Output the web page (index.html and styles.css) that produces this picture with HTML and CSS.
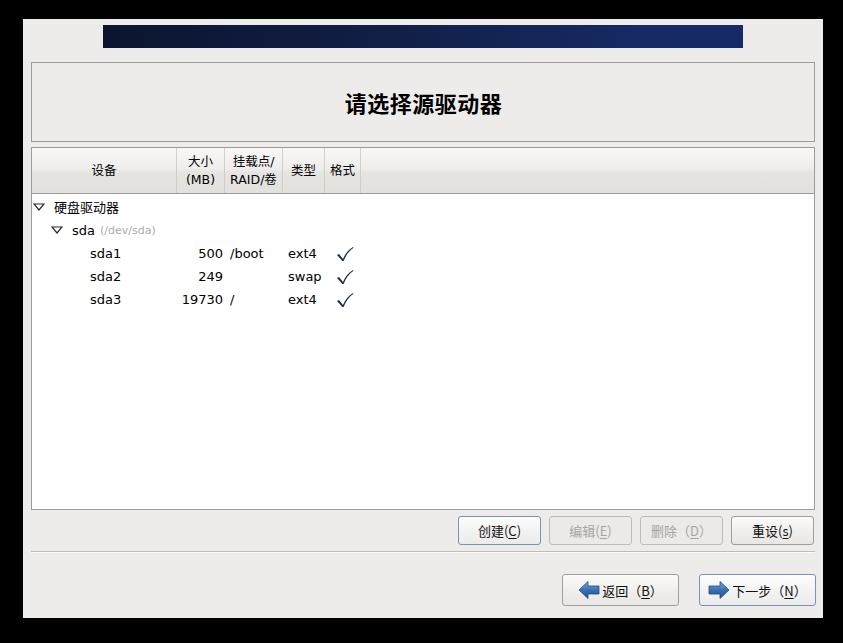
FILE: index.html
```html
<!DOCTYPE html>
<html>
<head>
<meta charset="utf-8">
<link rel="stylesheet" href="styles.css">
</head>
<body>
<div class="win">
  <div class="banner"></div>
  <div class="titlebox"><h1>请选择源驱动器</h1></div>
  <div class="tablebox">
    <div class="thead">
      <div class="th c1">设备</div>
      <div class="th c2">大小<br>(MB)</div>
      <div class="th c3">挂载点/<br>RAID/卷</div>
      <div class="th c4">类型</div>
      <div class="th c5">格式</div>
      <div class="th c6"></div>
    </div>
    <div class="tbody">
      <div class="row"><svg class="tri" width="12" height="8" viewBox="0 0 12 8"><path d="M1 1 L11 1 L6 7 Z" fill="none" stroke="#2a2a2a" stroke-width="1.2" stroke-linejoin="miter"/></svg><span class="lbl">硬盘驱动器</span></div>
      <div class="row lv2"><svg class="tri" width="12" height="8" viewBox="0 0 12 8"><path d="M1 1 L11 1 L6 7 Z" fill="none" stroke="#2a2a2a" stroke-width="1.2" stroke-linejoin="miter"/></svg><span class="lbl">sda</span><span class="dim">(/dev/sda)</span></div>
      <div class="row part"><span class="d1">sda1</span><span class="d2">500</span><span class="d3">/boot</span><span class="d4">ext4</span><span class="d5"><svg width="18" height="16" viewBox="0 0 18 16"><path d="M1 9 L3 8 L7 13 C9 8 12 4 17 1 L17.5 1.8 C13 5 10 9 7.6 15 L6.4 15 Z" fill="#1e2a4a"/></svg></span></div>
      <div class="row part"><span class="d1">sda2</span><span class="d2">249</span><span class="d3"></span><span class="d4">swap</span><span class="d5"><svg width="18" height="16" viewBox="0 0 18 16"><path d="M1 9 L3 8 L7 13 C9 8 12 4 17 1 L17.5 1.8 C13 5 10 9 7.6 15 L6.4 15 Z" fill="#1e2a4a"/></svg></span></div>
      <div class="row part"><span class="d1">sda3</span><span class="d2">19730</span><span class="d3">/</span><span class="d4">ext4</span><span class="d5"><svg width="18" height="16" viewBox="0 0 18 16"><path d="M1 9 L3 8 L7 13 C9 8 12 4 17 1 L17.5 1.8 C13 5 10 9 7.6 15 L6.4 15 Z" fill="#1e2a4a"/></svg></span></div>
    </div>
  </div>
  <div class="actions">
    <button class="btn focus">创建(<u>C</u>)</button>
    <button class="btn disabled">编辑(<u>E</u>)</button>
    <button class="btn disabled">删除（<u>D</u>）</button>
    <button class="btn">重设(<u>s</u>)</button>
  </div>
  <div class="sep"></div>
  <div class="nav">
    <button class="btn navbtn"><svg width="22" height="20" viewBox="0 0 22 20"><defs><linearGradient id="ga" x1="0" y1="0" x2="0" y2="1"><stop offset="0" stop-color="#7ea6d8"/><stop offset="0.5" stop-color="#3a6fb4"/><stop offset="1" stop-color="#1f4f91"/></linearGradient></defs><path d="M1 10 L10 1.5 L10 6 L21 6 L21 14 L10 14 L10 18.5 Z" fill="url(#ga)" stroke="#1d4a86" stroke-width="0.8"/></svg><span>返回（<u>B</u>）</span></button>
    <button class="btn navbtn focus"><svg width="22" height="20" viewBox="0 0 22 20"><defs><linearGradient id="gb" x1="0" y1="0" x2="0" y2="1"><stop offset="0" stop-color="#7ea6d8"/><stop offset="0.5" stop-color="#3a6fb4"/><stop offset="1" stop-color="#1f4f91"/></linearGradient></defs><path d="M21 10 L12 1.5 L12 6 L1 6 L1 14 L12 14 L12 18.5 Z" fill="url(#gb)" stroke="#1d4a86" stroke-width="0.8"/></svg><span>下一步（<u>N</u>）</span></button>
  </div>
</div>
</body>
</html>
```
FILE: styles.css
```css
html, body {
  margin: 0;
  padding: 0;
  background: #000;
}
body {
  width: 843px;
  height: 643px;
  padding-top: 19px;
  box-sizing: border-box;
  font-family: "DejaVu Sans", "Noto Sans CJK SC", sans-serif;
  font-size: 13px;
  color: #000;
}
.win {
  margin-left: 23px;
  width: 800px;
  height: 599px;
  background: #edecea;
  box-sizing: border-box;
  padding: 6px 8px 0 8px;
  display: flex;
  flex-direction: column;
}
.banner {
  align-self: center;
  width: 640px;
  height: 23px;
  background: linear-gradient(90deg, #0b1530 0%, #111f47 45%, #172a66 85%, #152a66 100%);
}
.titlebox {
  margin-top: 14px;
  height: 80px;
  border: 1px solid #9c9b98;
  box-sizing: border-box;
  display: flex;
  align-items: center;
  justify-content: center;
}
.titlebox h1 {
  margin: 0;
  font-family: "Noto Sans CJK SC", sans-serif;
  font-size: 22px;
  font-weight: bold;
  letter-spacing: 0.5px;
  padding-left: 1px;
}
.tablebox {
  margin-top: 5px;
  height: 363px;
  border: 1px solid #9c9b98;
  box-sizing: border-box;
  background: #fff;
}
.thead {
  display: flex;
  height: 46px;
  border-bottom: 1px solid #9c9b98;
  box-sizing: border-box;
  background: linear-gradient(#f8f7f5, #efeeec 45%, #e5e4e1 55%, #e2e1de);
}
.th {
  display: flex;
  align-items: center;
  justify-content: center;
  text-align: center;
  font-size: 12.5px;
  line-height: 18px;
  border-right: 1px solid #cfcecb;
  box-sizing: border-box;
}
.c1 { width: 145px; }
.c2 { width: 48px; }
.c3 { width: 58px; }
.c4 { width: 42px; }
.c5 { width: 36px; }
.c6 { flex: 1; border-right: none; }
.tbody {
  padding-top: 1px;
}
.row {
  height: 23px;
  display: flex;
  align-items: center;
  white-space: nowrap;
}
.row.lv2 { height: 24px; }
.tri {
  margin-left: 1px;
  margin-right: 9px;
  flex: none;
}
.lv2 .tri { margin-left: 19px; margin-right: 9px; }
.lbl { font-size: 13px; }
.dim {
  color: #aaa;
  font-size: 11px;
  margin-left: 5px;
  margin-top: 1px;
}
.part span { display: inline-block; }
.part .d1 { width: 145px; padding-left: 58px; box-sizing: border-box; }
.part .d2 { width: 46px; text-align: right; }
.part .d3 { width: 58px; padding-left: 7px; box-sizing: border-box; }
.part .d4 { width: 45px; padding-left: 7px; box-sizing: border-box; }
.part .d5 { padding-left: 10px; display: flex; align-items: center; }
.actions {
  margin-top: 6px;
  display: flex;
  justify-content: flex-end;
  gap: 8px;
  padding-right: 1px;
}
.btn {
  height: 30px;
  width: 83px;
  border: 1px solid #9f9e9b;
  border-radius: 3px;
  background: linear-gradient(#fbfbfa, #f0efed 50%, #e8e7e4);
  font-family: "Noto Sans CJK SC", "DejaVu Sans", sans-serif;
  font-size: 13px;
  color: #111;
  padding: 0;
  display: flex;
  align-items: center;
  justify-content: center;
  box-sizing: border-box;
}
.actions .btn { width: 83px; height: 29px; }
.btn u { text-decoration: underline; text-underline-offset: 2px; }
.btn.focus {
  border-color: #7b92b3;
  background: linear-gradient(#fdfdfd, #f3f3f3 50%, #ebebea);
}
.btn.disabled {
  color: #a6a5a2;
  border-color: #bdbcb9;
  background: #ebeae8;
}
.sep {
  margin-top: 6px;
  height: 1px;
  background: #bdbcb9;
  border-bottom: 1px solid #fbfbfa;
}
.nav {
  margin-top: 21px;
  display: flex;
  justify-content: flex-end;
  gap: 20px;
  margin-right: -1px;
}
.navbtn {
  width: 117px;
  height: 32px;
  gap: 1px;
}
.navbtn svg { margin-right: 1px; }
```
